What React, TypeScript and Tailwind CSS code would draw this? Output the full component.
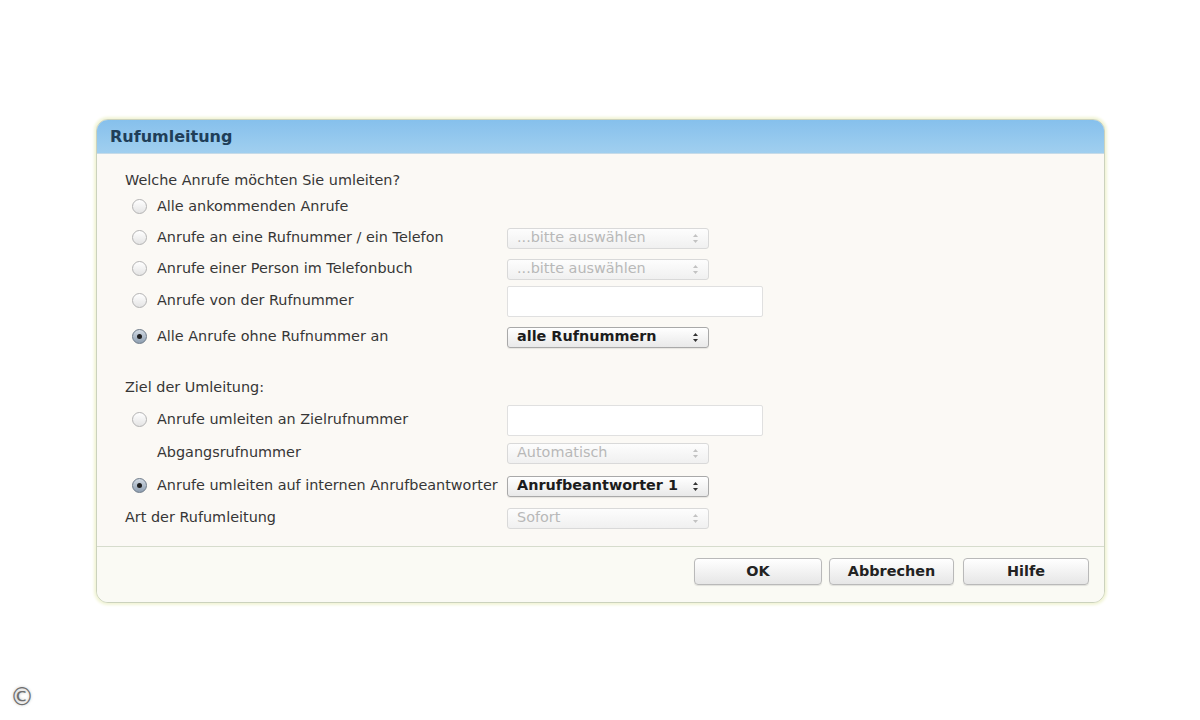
import React from "react";

const font = { fontFamily: '"DejaVu Sans", Verdana, sans-serif' };

function Radio({ checked }: { checked?: boolean }) {
  return checked ? (
    <span className="relative inline-flex h-[15px] w-[15px] shrink-0 items-center justify-center rounded-full border border-[#6d7a88] bg-gradient-to-b from-[#d3dbe4] to-[#8e9fb1]">
      <span className="h-[5px] w-[5px] rounded-full bg-[#1e1e1e]" />
    </span>
  ) : (
    <span className="inline-block h-[15px] w-[15px] shrink-0 rounded-full border border-[#b3b3b3] bg-gradient-to-b from-white to-[#e4e4e4]" />
  );
}

function Arrows({ disabled }: { disabled?: boolean }) {
  const c = disabled ? "#c2c2c2" : "#333";
  return (
    <svg width="7" height="11" viewBox="0 0 7 11">
      <path d="M3.5 1 L6 4 L1 4 Z" fill={c} />
      <path d="M3.5 10 L6 7 L1 7 Z" fill={c} />
    </svg>
  );
}

function Select({ value, disabled }: { value: string; disabled?: boolean }) {
  return disabled ? (
    <div className="flex h-[21px] w-[202px] items-center justify-between rounded-[3px] border border-[#d9d9d9] bg-gradient-to-b from-[#fdfdfd] to-[#f0f0f0] pl-[9px] pr-[9px] text-[14.4px] text-[#b8b8b8]">
      <span>{value}</span>
      <Arrows disabled />
    </div>
  ) : (
    <div className="flex h-[21px] w-[202px] items-center justify-between rounded-[3px] border border-[#a9a9a9] bg-gradient-to-b from-white to-[#e9e9e9] pl-[9px] pr-[9px] text-[14.4px] font-bold text-[#1c1c1c] shadow-[0_1px_1px_rgba(0,0,0,0.08)]">
      <span>{value}</span>
      <Arrows />
    </div>
  );
}

function Input() {
  return <div className="h-[31px] w-[256px] rounded-[2px] border border-[#e0e0e0] bg-white" />;
}

function Row({
  h,
  radio,
  checked,
  indent,
  label,
  children,
}: {
  h: string;
  radio?: boolean;
  checked?: boolean;
  indent?: boolean;
  label: string;
  children?: React.ReactNode;
}) {
  return (
    <div className={`flex items-center ${h}`}>
      <div className="flex w-[382px] items-center">
        {radio ? (
          <span className="ml-[7px] mr-[10px] flex items-center">
            <Radio checked={checked} />
          </span>
        ) : indent ? (
          <span className="w-[32px]" />
        ) : null}
        <span className="whitespace-nowrap">{label}</span>
      </div>
      {children}
    </div>
  );
}

function Button({ label }: { label: string }) {
  return (
    <div className="flex h-[27px] items-center justify-center rounded-[4px] border border-[#b9b9b9] bg-gradient-to-b from-white to-[#e6e6e6] text-[14.4px] font-bold text-[#222] shadow-[0_1px_1px_rgba(0,0,0,0.1)]">
      {label}
    </div>
  );
}

export default function App() {
  return (
    <div className="relative h-[720px] w-[1200px] bg-white text-[14.4px] text-[#363636]" style={font}>
      <div className="pl-[96px] pt-[119px]">
        <div className="w-[1009px] rounded-[12px] border border-[#cbd2bd] bg-[#fbf9f5] shadow-[0_0_3px_2px_#f1f4d6]">
          <div className="flex h-[34px] items-center rounded-t-[11px] border-b border-[#c6dbe8] bg-gradient-to-b from-[#86c0ec] to-[#a0cfef] pl-[13px] text-[16px] font-bold text-[#203e58]">
            Rufumleitung
          </div>
          <div className="pl-[28px] pt-[16px] pb-[16px]">
            <div className="flex h-[22px] items-center">Welche Anrufe möchten Sie umleiten?</div>
            <Row h="h-[30px]" radio label="Alle ankommenden Anrufe" />
            <Row h="h-[32px]" radio label="Anrufe an eine Rufnummer / ein Telefon">
              <Select value="...bitte auswählen" disabled />
            </Row>
            <Row h="h-[30px]" radio label="Anrufe einer Person im Telefonbuch">
              <Select value="...bitte auswählen" disabled />
            </Row>
            <Row h="h-[34px]" radio label="Anrufe von der Rufnummer">
              <Input />
            </Row>
            <Row h="h-[38px]" radio checked label="Alle Anrufe ohne Rufnummer an">
              <Select value="alle Rufnummern" />
            </Row>
            <div className="mt-[20px] flex h-[24px] items-center">Ziel der Umleitung:</div>
            <Row h="h-[40px]" radio label="Anrufe umleiten an Zielrufnummer">
              <Input />
            </Row>
            <Row h="h-[26px]" indent label="Abgangsrufnummer">
              <Select value="Automatisch" disabled />
            </Row>
            <Row h="h-[40px]" radio checked label="Anrufe umleiten auf internen Anrufbeantworter">
              <Select value="Anrufbeantworter 1" />
            </Row>
            <Row h="h-[24px]" label="Art der Rufumleitung">
              <Select value="Sofort" disabled />
            </Row>
          </div>
          <div className="h-px bg-[#d6dccd]" />
          <div className="flex justify-end gap-[7px] rounded-b-[11px] bg-[#fafaf4] pb-[17px] pr-[15px] pt-[11px]">
            <div className="w-[128px]"><Button label="OK" /></div>
            <div className="w-[125px]"><Button label="Abbrechen" /></div>
            <div className="ml-[2px] w-[126px]"><Button label="Hilfe" /></div>
          </div>
        </div>
      </div>
      <div className="absolute left-[12px] top-[687px] flex h-[20px] w-[20px] items-center justify-center rounded-full text-[24px] leading-none text-[#6e6e6e] [text-shadow:0_0_3px_#bbb]">
        ©
      </div>
    </div>
  );
}
